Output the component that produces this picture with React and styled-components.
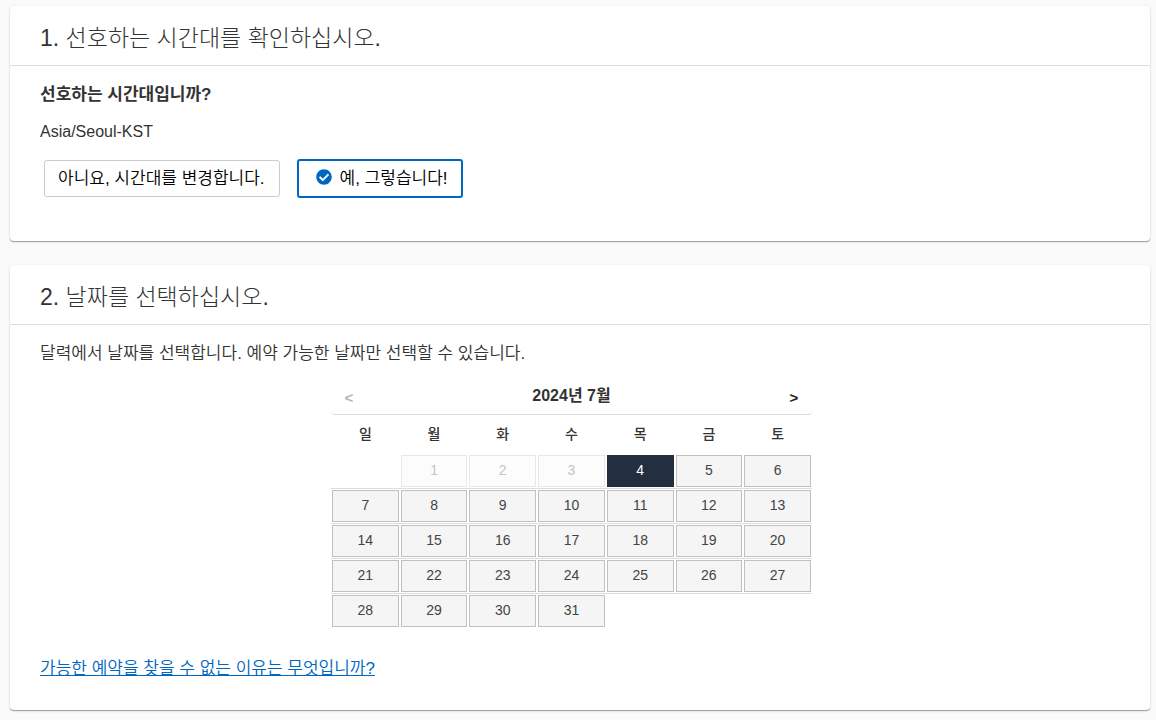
import React from 'react';
import styled, { createGlobalStyle, css } from 'styled-components';
import { FaCheckCircle } from 'react-icons/fa';

const GlobalStyle = createGlobalStyle`
  * {
    box-sizing: border-box;
  }
  body {
    margin: 0;
    background: #fafafa;
    color: #333;
    font-family: 'Liberation Sans', 'Noto Sans CJK KR', sans-serif;
    font-size: 16px;
  }
  button {
    font-family: inherit;
    cursor: pointer;
  }
`;

const Page = styled.main`
  display: flex;
  flex-direction: column;
  gap: 24px;
  padding: 6px 6px 8px 10px;
`;

const Card = styled.section`
  background: #fff;
  border-radius: 4px;
  box-shadow: 0 1px 0 #a0a3a3, 0 1px 3px rgba(0, 0, 0, 0.16);
`;

const CardTitle = styled.h2`
  margin: 0;
  padding: 18px 30px 13px;
  border-bottom: 1px solid #ddd;
  font-size: 23px;
  font-weight: 300;
  line-height: 28px;
`;

const CardBody = styled.div`
  padding: ${(props) => props.$padding};
`;

const Question = styled.p`
  margin: 0 0 13px;
  font-size: 17px;
  font-weight: 700;
  line-height: 24px;
`;

const TimeZone = styled.p`
  margin: 0 0 15px;
  line-height: 24px;
`;

const Choices = styled.div`
  display: flex;
  flex-wrap: wrap;
  align-items: center;
  gap: 17px;
  padding-left: 4px;
`;

const ChoiceButton = styled.button`
  display: flex;
  align-items: center;
  gap: 8px;
  padding: 5px 14px 5px 13px;
  border: 1px solid #ccc;
  border-radius: 3px;
  background: #fff;
  color: #000;
  font-size: 17px;
  font-weight: 350;
  line-height: 25px;
  svg {
    margin-bottom: 3px;
    color: #0067c0;
    font-size: 16px;
  }
  ${(props) => props.$selected && css`
    padding: 5px 13px 5px 17px;
    border: 2px solid #0067c0;
  `}
`;

const Hint = styled.p`
  margin: 0 0 11px;
  font-size: 17px;
  font-weight: 350;
  line-height: 24px;
`;

const Calendar = styled.div`
  max-width: 481px;
  margin: 0 auto 29px;
`;

const CalendarHeader = styled.div`
  display: flex;
  align-items: center;
  justify-content: space-between;
  height: 38px;
  padding: 0 8px;
  border-bottom: 1px solid #ddd;
  border-radius: 4px;
`;

const MonthTitle = styled.strong`
  font-size: 16px;
  line-height: 24px;
`;

const MonthButton = styled.button`
  width: 20px;
  padding: 4px 0 0;
  border: 0;
  background: none;
  color: #222;
  font-size: 15px;
  font-weight: 700;
  &:disabled {
    color: #b5b5b5;
    cursor: default;
  }
`;

const DayTable = styled.table`
  width: 100%;
  table-layout: fixed;
  border-collapse: separate;
  border-spacing: 0;
  th {
    height: 39px;
    padding: 0 0 4px;
    font-size: 14px;
    font-weight: 500;
  }
  td {
    padding: 1px;
    border-top: 1px solid #ddd;
  }
  tbody tr:first-child td {
    border-top: 0;
  }
`;

const DayButton = styled.button`
  display: block;
  width: 100%;
  height: 32px;
  padding: 0 0 2px;
  border: 1px solid #c0c0c0;
  background: #f5f5f5;
  color: #444;
  font-size: 14px;
  &:disabled {
    border-color: #e8e8e8;
    background: #fcfcfc;
    color: #c4c4c4;
    cursor: default;
  }
  ${(props) => props.$selected && css`
    border-color: #232f3e;
    background: #232f3e;
    color: #fff;
  `}
`;

const HelpLink = styled.a`
  color: #0067c0;
  font-size: 17px;
  font-weight: 350;
  line-height: 24px;
  text-decoration: underline;
`;

const weekDays = ['일', '월', '화', '수', '목', '금', '토'];

const weeks = [
  [null, 1, 2, 3, 4, 5, 6],
  [7, 8, 9, 10, 11, 12, 13],
  [14, 15, 16, 17, 18, 19, 20],
  [21, 22, 23, 24, 25, 26, 27],
  [28, 29, 30, 31, null, null, null],
];

const today = 4;

const App = () => (
  <>
    <GlobalStyle />
    <Page>
      <Card>
        <CardTitle>1. 선호하는 시간대를 확인하십시오.</CardTitle>
        <CardBody $padding="17px 30px 43px">
          <Question>선호하는 시간대입니까?</Question>
          <TimeZone>Asia/Seoul-KST</TimeZone>
          <Choices>
            <ChoiceButton type="button">아니요, 시간대를 변경합니다.</ChoiceButton>
            <ChoiceButton type="button" $selected>
              <FaCheckCircle />
              예, 그렇습니다!
            </ChoiceButton>
          </Choices>
        </CardBody>
      </Card>
      <Card>
        <CardTitle>2. 날짜를 선택하십시오.</CardTitle>
        <CardBody $padding="17px 47px 29px 30px">
          <Hint>달력에서 날짜를 선택합니다. 예약 가능한 날짜만 선택할 수 있습니다.</Hint>
          <Calendar>
            <CalendarHeader>
              <MonthButton type="button" disabled>&lt;</MonthButton>
              <MonthTitle>2024년 7월</MonthTitle>
              <MonthButton type="button">&gt;</MonthButton>
            </CalendarHeader>
            <DayTable>
              <thead>
                <tr>
                  {weekDays.map((name) => <th key={name} scope="col">{name}</th>)}
                </tr>
              </thead>
              <tbody>
                {weeks.map((week) => (
                  <tr key={week.join('-')}>
                    {week.map((day, index) => (
                      <td key={weekDays[index]}>
                        {day && (
                          <DayButton type="button" disabled={day < today} $selected={day === today}>
                            {day}
                          </DayButton>
                        )}
                      </td>
                    ))}
                  </tr>
                ))}
              </tbody>
            </DayTable>
          </Calendar>
          <HelpLink href="#help">가능한 예약을 찾을 수 없는 이유는 무엇입니까?</HelpLink>
        </CardBody>
      </Card>
    </Page>
  </>
);

export default App;
